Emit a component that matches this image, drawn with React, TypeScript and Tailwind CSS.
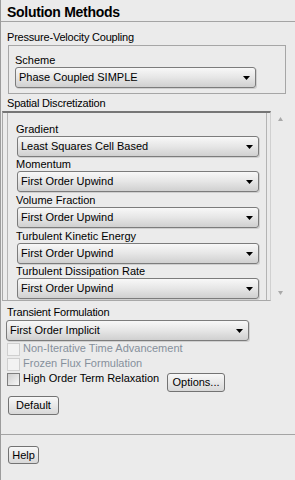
import clsx from "clsx";

function Arrow() {
  return (
    <svg width="7" height="4" viewBox="0 0 7 4" className="shrink-0">
      <path d="M0 0h7L3.5 4z" fill="#000" />
    </svg>
  );
}

function Select({ value, className }: { value: string; className?: string }) {
  return (
    <div
      className={clsx(
        "flex items-center justify-between h-[21px] rounded-[3px] border border-[#7c7c7c] bg-linear-to-b from-[#f8f8f8] via-[#e6e6e6] to-[#d0d0d0] pl-[3px] pr-[5px] shadow-[1px_1px_0_#cfcfcf]",
        className
      )}
    >
      <span className="leading-[19px] whitespace-nowrap">{value}</span>
      <Arrow />
    </div>
  );
}

function Field({ label, value, className }: { label: string; value: string; className?: string }) {
  return (
    <div className={className}>
      <div className="leading-[14px]">{label}</div>
      <Select value={value} className="ml-[1px] w-[242px]" />
    </div>
  );
}

function Button({ children, className }: { children: string; className?: string }) {
  return (
    <div
      className={clsx(
        "flex items-center justify-center rounded-[3px] border border-[#737373] bg-linear-to-b from-[#f8f8f8] to-[#d8d8d8] leading-[13px]",
        className
      )}
    >
      {children}
    </div>
  );
}

function Check({ label, disabled }: { label: string; disabled?: boolean }) {
  return (
    <div className="flex items-center h-[15px]">
      <div
        className={clsx(
          "w-[13px] h-[13px] border",
          disabled
            ? "border-[#cfcfcf] bg-[#f2f2f2]"
            : "border-[#7e7e7e] bg-linear-to-br from-[#cfcfcf] to-[#f7f7f7]"
        )}
      />
      <span
        className={clsx(
          "ml-[3px] pb-[2px] leading-[13px] whitespace-nowrap",
          disabled ? "text-[#86909c]" : "text-black"
        )}
      >
        {label}
      </span>
    </div>
  );
}

function App() {
  return (
    <div className="flex flex-col w-[295px] h-[480px] overflow-hidden bg-[#ebebeb] border-l border-[#9c9c9c] text-[11px] text-black font-[family-name:'Liberation_Sans',Arial,sans-serif]">
      {/* Header */}
      <div className="h-[22px] shrink-0 pt-[3px] pl-[6px] border-b border-[#a4a4a4] text-[14px] font-bold leading-[18px] tracking-[-0.3px]">
        Solution Methods
      </div>

      {/* Pressure-Velocity Coupling */}
      <div className="mt-[9px] pl-[6px] leading-[13px] tracking-[-0.2px]">Pressure-Velocity Coupling</div>
      <div className="mt-[1px] ml-[7px] w-[278px] h-[49px] border border-[#a6a6a6] pt-[8px] pl-[6px]">
        <div className="leading-[13px]">Scheme</div>
        <Select value="Phase Coupled SIMPLE" className="w-[241px] pl-[2px]" />
      </div>

      {/* Spatial Discretization */}
      <div className="mt-[3px] pl-[6px] leading-[13px] tracking-[-0.2px]">Spatial Discretization</div>
      <div className="mt-[1px] flex h-[190px] shrink-0">
        <div className="ml-[1px] w-[269px] h-full border-t-2 border-t-[#767676] border-l border-r border-b border-l-[#a8a8a8] border-r-[#d0d0d0] border-b-[#a8a8a8] overflow-hidden">
          <div className="ml-[4px] w-[260px] h-full border-l border-r border-[#b4b4b4] pt-[9px] pl-[8px]">
            <Field label="Gradient" value="Least Squares Cell Based" />
            <Field label="Momentum" value="First Order Upwind" />
            <Field label="Volume Fraction" value="First Order Upwind" className="mt-[1px]" />
            <Field label="Turbulent Kinetic Energy" value="First Order Upwind" className="mt-[1px]" />
            <Field label="Turbulent Dissipation Rate" value="First Order Upwind" />
          </div>
        </div>
        {/* Scrollbar */}
        <div className="flex flex-col justify-between flex-1 pl-[7px] pt-[6px] pb-[6px]">
          <svg width="5" height="4" viewBox="0 0 5 4">
            <path d="M2.5 0L5 4H0z" fill="#a9a9a9" />
          </svg>
          <svg width="5" height="4" viewBox="0 0 5 4">
            <path d="M0 0h5L2.5 4z" fill="#a9a9a9" />
          </svg>
        </div>
      </div>

      {/* Transient Formulation */}
      <div className="mt-[4px] pl-[6px] leading-[14px] tracking-[-0.2px]">Transient Formulation</div>
      <Select value="First Order Implicit" className="mt-[1px] ml-[5px] w-[243px]" />

      <div className="mt-[1px] pl-[6px]">
        <Check label="Non-Iterative Time Advancement" disabled />
        <Check label="Frozen Flux Formulation" disabled />
        <div className="flex items-start">
          <div className="w-[160px]">
            <Check label="High Order Term Relaxation" />
          </div>
          <Button className="w-[58px] h-[19px] mt-[1px]">Options...</Button>
        </div>
      </div>

      <Button className="mt-[4px] ml-[7px] w-[51px] h-[19px]">Default</Button>

      <div className="mt-[19px] border-t border-[#a4a4a4]" />

      <Button className="mt-[11px] ml-[7px] w-[31px] h-[18px]">Help</Button>
    </div>
  );
}

export default App;
